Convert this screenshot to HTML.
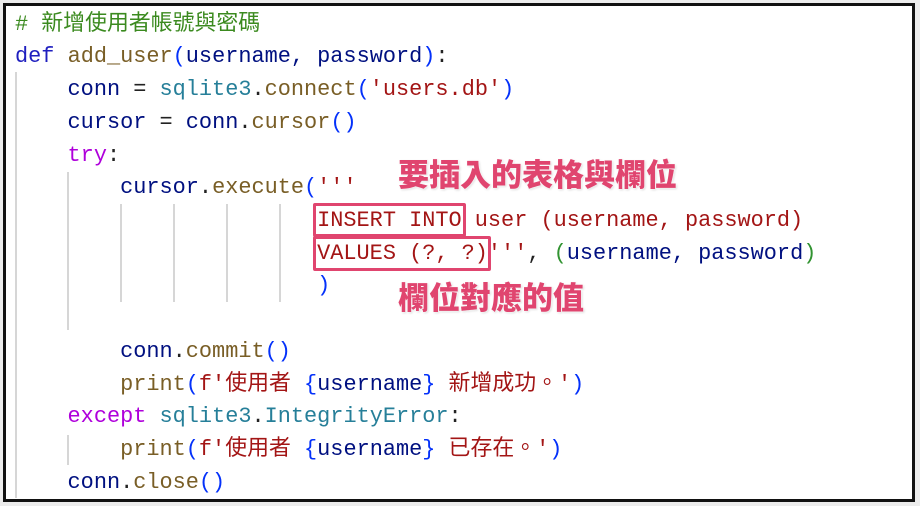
<!DOCTYPE html>
<html><head><meta charset="utf-8"><style>
html,body{margin:0;padding:0;width:920px;height:506px;background:#ececec;overflow:hidden;position:relative}
.frame{position:absolute;left:3px;top:3px;width:906px;height:493px;border:3px solid #111;background:#fff}
.l{position:absolute;left:15px;height:33px;line-height:33px;font-family:"Liberation Mono","Noto Sans CJK TC",monospace;font-size:21.9px;white-space:pre;color:#001080}
.cm{color:#3b8a1f}.kw{color:#1f1fbf}.fn{color:#795e26}.v{color:#001080}.cl{color:#267f99}.s{color:#a31515}.p{color:#af00db}.b{color:#0431fa}.g{color:#319331}.o{color:#222}
.cj{font-family:"Noto Sans CJK TC",sans-serif;line-height:0}
.gd{position:absolute;width:2px;background:#d6d6d6}
.box{position:absolute;border:3px solid #e0456f;border-radius:2px}
.ann{position:absolute;font-family:"Noto Sans CJK TC",sans-serif;font-weight:900;font-size:31px;color:#e0456f;line-height:34px;text-shadow:0 0 2px #fff,0 0 3px #fff,1px 1px 2px #ccc}
</style></head><body>
<div class="frame"></div>
<div class="gd" style="left:15px;top:72px;height:426px"></div>
<div class="gd" style="left:67px;top:172px;height:158px"></div>
<div class="gd" style="left:120px;top:204px;height:98px"></div>
<div class="gd" style="left:173px;top:204px;height:98px"></div>
<div class="gd" style="left:226px;top:204px;height:98px"></div>
<div class="gd" style="left:279px;top:204px;height:98px"></div>
<div class="gd" style="left:67px;top:435px;height:30px"></div>

<div class="l" style="top:8px"><span class="cm"># <span class="cj">新增使用者帳號與密碼</span></span></div>
<div class="l" style="top:40px"><span class="kw">def</span> <span class="fn">add_user</span><span class="b">(</span>username, password<span class="b">)</span><span class="o">:</span></div>
<div class="l" style="top:73px">    conn <span class="o">=</span> <span class="cl">sqlite3</span><span class="o">.</span><span class="fn">connect</span><span class="b">(</span><span class="s">'users.db'</span><span class="b">)</span></div>
<div class="l" style="top:106px">    cursor <span class="o">=</span> conn<span class="o">.</span><span class="fn">cursor</span><span class="b">()</span></div>
<div class="l" style="top:139px">    <span class="p">try</span><span class="o">:</span></div>
<div class="l" style="top:171px">        cursor<span class="o">.</span><span class="fn">execute</span><span class="b">(</span><span class="s">'''</span></div>
<div class="l s" style="top:204px">                       INSERT INTO user (username, password)</div>
<div class="l" style="top:237px"><span class="s">                       VALUES (?, ?)'''</span><span class="o">, </span><span class="g">(</span>username, password<span class="g">)</span></div>
<div class="l" style="top:269px">                       <span class="b">)</span></div>
<div class="l" style="top:335px">        conn<span class="o">.</span><span class="fn">commit</span><span class="b">()</span></div>
<div class="l" style="top:368px">        <span class="fn">print</span><span class="b">(</span><span class="s">f'<span class="cj">使用者</span> </span><span class="b">{</span>username<span class="b">}</span><span class="s"> <span class="cj">新增成功。</span>'</span><span class="b">)</span></div>
<div class="l" style="top:400px">    <span class="p">except</span> <span class="cl">sqlite3</span><span class="o">.</span><span class="cl">IntegrityError</span><span class="o">:</span></div>
<div class="l" style="top:433px">        <span class="fn">print</span><span class="b">(</span><span class="s">f'<span class="cj">使用者</span> </span><span class="b">{</span>username<span class="b">}</span><span class="s"> <span class="cj">已存在。</span>'</span><span class="b">)</span></div>
<div class="l" style="top:466px">    conn<span class="o">.</span><span class="fn">close</span><span class="b">()</span></div>

<div class="box" style="left:313px;top:203px;width:147px;height:28px"></div>
<div class="box" style="left:313px;top:236px;width:172px;height:29px"></div>
<div class="ann" style="left:398px;top:156px">要插入的表格與欄位</div>
<div class="ann" style="left:398px;top:279px">欄位對應的值</div>
</body></html>
